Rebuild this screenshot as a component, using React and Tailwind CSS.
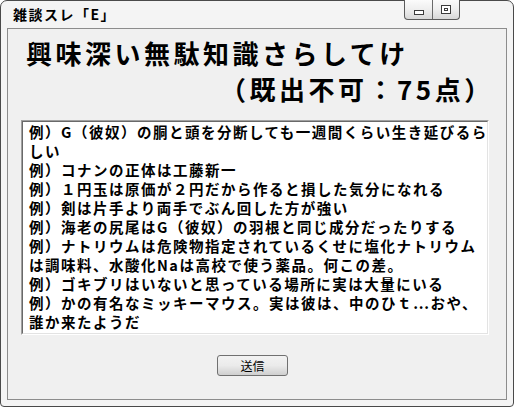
import React from "react";

const lines = [
  "例）G（彼奴）の胴と頭を分断しても一週間くらい生き延びるら",
  "しい",
  "例）コナンの正体は工藤新一",
  "例）１円玉は原価が２円だから作ると損した気分になれる",
  "例）剣は片手より両手でぶん回した方が強い",
  "例）海老の尻尾はG（彼奴）の羽根と同じ成分だったりする",
  "例）ナトリウムは危険物指定されているくせに塩化ナトリウム",
  "は調味料、水酸化Naは高校で使う薬品。何この差。",
  "例）ゴキブリはいないと思っている場所に実は大量にいる",
  "例）かの有名なミッキーマウス。実は彼は、中のひｔ…おや、",
  "誰か来たようだ",
];

const CaptionButtons = () => (
  <div className="-mt-px mr-[53px] flex h-[20px] overflow-hidden rounded-b-[4px] border border-t-0 border-[#5a5a5a] bg-gradient-to-b from-[#fbfbfb] via-[#eeeeee] to-[#d8d8d8]">
    <div className="flex w-[28px] items-center justify-center border-r border-[#6a6a6a]">
      <div className="mt-[6px] h-[5px] w-[10px] border border-[#3c3c3c] bg-white" />
    </div>
    <div className="flex w-[26px] items-center justify-center">
      <div className="flex h-[9px] w-[10px] items-center justify-center border border-[#3c3c3c] bg-white">
        <div className="h-[3px] w-[4px] border border-[#3c3c3c]" />
      </div>
    </div>
  </div>
);

export default function App() {
  return (
    <div className="h-[407px] w-[514px] bg-white font-['Noto_Sans_CJK_JP',sans-serif] text-black">
      <div className="flex h-full flex-col rounded-t-[7px] rounded-b-[4px] border border-[#4a4a4a] bg-[#f4f4f4]">
        <div className="flex h-[27px] items-start justify-between">
          <div className="pl-[12px] pt-[3px] text-[14px] font-bold leading-[20px] tracking-[1.5px]">
            雑談スレ「E」
          </div>
          <CaptionButtons />
        </div>

        <div className="mx-[6px] mb-[6px] flex flex-1 flex-col border border-[#8c8c8c] bg-[#f0f0f0]">
          <div className="pl-[18px] pt-[6px] text-[26px] font-bold leading-[36px] tracking-[3.5px]">
            <div className="whitespace-nowrap">興味深い無駄知識さらしてけ</div>
            <div className="whitespace-nowrap pl-[194px]">（既出不可：75点）</div>
          </div>

          <div className="ml-[13px] mt-[13px] h-[215px] w-[468px] border border-b-white border-l-[#a0a0a0] border-r-white border-t-[#a0a0a0]">
            <div className="h-full w-full border border-b-[#e3e3e3] border-l-[#696969] border-r-[#e3e3e3] border-t-[#696969] bg-white pl-[6px]">
              {lines.map((line, i) => (
                <div
                  key={i}
                  className="whitespace-nowrap text-[14.5px] font-bold leading-[19px] tracking-[1.5px]"
                >
                  {line}
                </div>
              ))}
            </div>
          </div>

          <button className="ml-[209px] mt-[20px] flex h-[21px] w-[71px] items-center justify-center rounded-[3px] border border-[#707070] bg-gradient-to-b from-[#f2f2f2] via-[#ebebeb] to-[#cfcfcf] text-[12px] leading-none">
            送信
          </button>
        </div>
      </div>
    </div>
  );
}
